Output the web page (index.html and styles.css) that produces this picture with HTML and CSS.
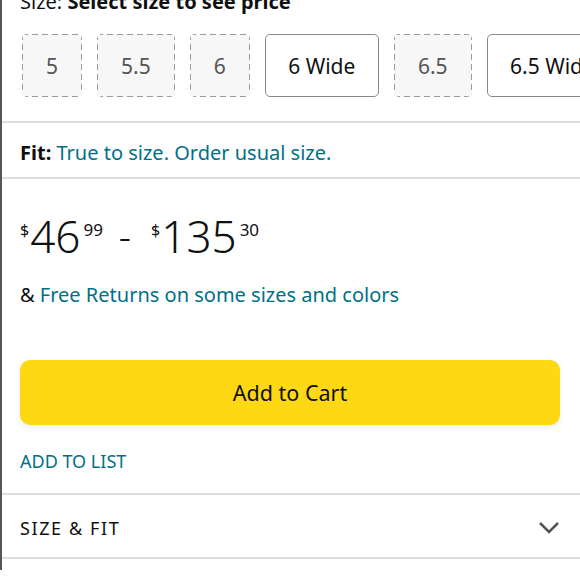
FILE: index.html
```html
<!DOCTYPE html>
<html>
<head>
<meta charset="utf-8">
<link rel="stylesheet" href="styles.css">
</head>
<body>
<div class="page">
  <section class="sizes">
    <div class="size-label">Size: <b>Select size to see price</b></div>
    <div class="size-row">
      <div class="size dashed">5</div>
      <div class="size dashed">5.5</div>
      <div class="size dashed">6</div>
      <div class="size solid">6 Wide</div>
      <div class="size dashed">6.5</div>
      <div class="size solid">6.5 Wide</div>
    </div>
  </section>
  <section class="fit">
    <b>Fit:</b> <span class="link">True to size. Order usual size.</span>
  </section>
  <section class="buy">
    <div class="price">
      <span class="cur">$</span><span class="whole">46</span><span class="frac">99</span>
      <span class="dash">-</span>
      <span class="cur">$</span><span class="whole">135</span><span class="frac">30</span>
    </div>
    <div class="returns">&amp; <span class="link">Free Returns on some sizes and colors</span></div>
    <button class="cart">Add to Cart</button>
    <div class="list">ADD TO LIST</div>
  </section>
  <section class="accordion">
    <span class="acc-title">SIZE &amp; FIT</span>
    <svg class="chev" width="22" height="14" viewBox="0 0 22 14"><path d="M2 2 L11 11 L20 2" fill="none" stroke="#555" stroke-width="2.6"/></svg>
  </section>
</div>
</body>
</html>
```
FILE: styles.css
```css
* { box-sizing: border-box; }
html, body { margin: 0; padding: 0; background: #fff; }
body {
  font-family: "Noto Sans", "Liberation Sans", sans-serif;
  color: #0f1111;
  overflow: hidden;
  height: 580px;
}
.page {
  border-left: 2px solid #555;
  min-height: 580px;
}
.link { color: #007185; }
.sizes {
  padding: 0 0 24px 18px;
  border-bottom: 2px solid #dddddd;
}
.size-label {
  font-size: 20px;
  line-height: 24px;
  margin-top: -10px;
}
.size-row {
  display: flex;
  gap: 15px;
  margin: 20px 0 0 2px;
  overflow: hidden;
  white-space: nowrap;
}
.size {
  flex: none;
  height: 63px;
  display: flex;
  align-items: center;
  justify-content: center;
  font-size: 21px;
  padding: 0 24px;
  border-radius: 5px;
}
.size.dashed {
  color: #555;
  background:
    repeating-linear-gradient(90deg, #9a9a9a 0 6px, transparent 6px 10px) left top / 100% 1px no-repeat,
    repeating-linear-gradient(90deg, #9a9a9a 0 6px, transparent 6px 10px) left bottom / 100% 1px no-repeat,
    repeating-linear-gradient(180deg, #9a9a9a 0 6px, transparent 6px 10px) left top / 1px 100% no-repeat,
    repeating-linear-gradient(180deg, #9a9a9a 0 6px, transparent 6px 10px) right top / 1px 100% no-repeat,
    #f7f7f7;
}
.size.solid {
  background: #fff;
  border: 1px solid #888;
  color: #0f1111;
  padding: 0 22.5px;
}
.fit {
  font-size: 20px;
  line-height: 24px;
  padding: 18px 18px 12px;
  border-bottom: 2px solid #dddddd;
}
.buy {
  padding: 38px 18px 20px;
  border-bottom: 2px solid #dddddd;
}
.price {
  display: flex;
  align-items: flex-start;
  height: 48px;
  line-height: 1;
}
.cur { font-size: 16px; margin-top: 5px; margin-right: 1px; }
.whole { font-size: 44px; font-weight: 300; margin-top: -3px; }
.frac { font-size: 17px; margin-top: 4px; margin-left: 3px; }
.dash { font-size: 38px; font-weight: 300; margin: -1px 20px 0 16px; }
.returns {
  font-size: 20px;
  line-height: 24px;
  margin-top: 18px;
}
.cart {
  display: block;
  width: 540px;
  height: 65px;
  margin-top: 53px;
  border: none;
  border-radius: 10px;
  background: #ffd814;
  box-shadow: 0 2px 5px rgba(213, 217, 217, 0.5);
  font-family: inherit;
  font-size: 21.5px;
  color: #0f1111;
}
.list {
  color: #007185;
  font-size: 18px;
  line-height: 24px;
  margin-top: 24px;
}
.accordion {
  display: flex;
  align-items: center;
  justify-content: space-between;
  height: 64px;
  padding: 3px 20px 0 18px;
  border-bottom: 2px solid #dddddd;
}
.acc-title {
  font-size: 18px;
  letter-spacing: 1.6px;
}
.chev { display: block; }
```
